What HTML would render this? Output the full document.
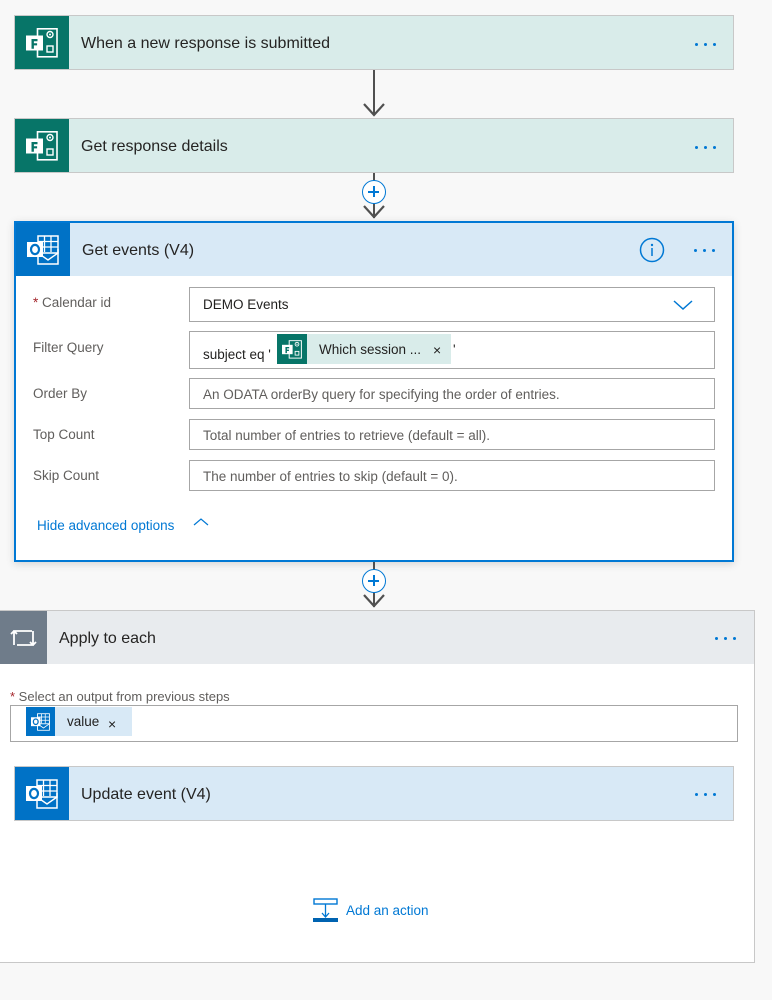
<!DOCTYPE html>
<html><head><meta charset="utf-8"><style>
*{margin:0;padding:0;box-sizing:border-box}
body{width:772px;height:1000px;background:#f8f8f8;font-family:"Liberation Sans",sans-serif;position:relative;overflow:hidden;color:#201f1e}
.a{position:absolute}
.card{position:absolute;border:1px solid #c8c8c8}
.ib{position:absolute;left:0;top:0;bottom:0;width:54px;display:flex;align-items:center;justify-content:center}
.title{position:absolute;font-size:16px;color:#252423}
.dots{position:absolute;font-size:0}
.dots i{display:inline-block;width:3px;height:3px;border-radius:50%;background:#0078d4;margin-right:6px}
.lbl{position:absolute;left:33px;font-size:13.5px;color:#605e5c}
.inp{position:absolute;left:189px;width:526px;border:1px solid #a6a6a6;background:#fff;font-size:13.5px;padding-left:13px;color:#605e5c}
.line{position:absolute;left:373px;width:2px;background:#505050}
.plus{position:absolute;left:362px;width:24px;height:24px;border:1.5px solid #0078d4;border-radius:50%;background:#fff}
.plus:before{content:"";position:absolute;left:5px;top:10px;width:11px;height:1.5px;background:#0078d4}
.plus:after{content:"";position:absolute;left:10px;top:5px;width:1.5px;height:11px;background:#0078d4}
</style></head><body>
<svg width="0" height="0" style="position:absolute"><defs>
<symbol id="forms" viewBox="0 0 32 30"><rect x="11.5" y="0.8" width="19.5" height="28" fill="none" stroke="#fff" stroke-width="1.6"/><circle cx="24" cy="6.5" r="3" fill="none" stroke="#fff" stroke-width="1.4"/><circle cx="24" cy="6.5" r="1" fill="#fff"/><rect x="21" y="18" width="6" height="6" fill="none" stroke="#fff" stroke-width="1.4"/><rect x="0" y="7.5" width="17" height="15" fill="#fff"/><path d="M5.5 11h6v2.2h-3.6v2h3.2v2.2h-3.2v3.3h-2.4z" fill="#077568"/></symbol>
<symbol id="ol" viewBox="0 0 32 30"><rect x="11" y="1" width="20" height="17" fill="none" stroke="#fff" stroke-width="1.5"/><path d="M17.5 1v16M24 1v16M11 6.5h20M11 12h20" stroke="#fff" stroke-width="1.3"/><path d="M11 18v11h20V14" fill="none" stroke="#fff" stroke-width="1.5"/><path d="M11 18l10 7 10-7" fill="none" stroke="#fff" stroke-width="1.4"/><rect x="0" y="7" width="16" height="15" fill="#fff"/><ellipse cx="8" cy="14.5" rx="4" ry="4.6" fill="none" stroke="#0072c6" stroke-width="2.2"/></symbol>
</defs></svg>

<div class="card" style="left:14px;top:15px;width:720px;height:55px;background:#d9ecea">
<div class="ib" style="background:#077568"><svg width="32" height="30"><use href="#forms"/></svg></div>
<div class="title" style="left:66px;top:19px">When a new response is submitted</div>
<div class="dots" style="left:680px;top:27px"><i></i><i></i><i></i></div>
</div>
<div class="line" style="top:70px;height:45px"></div>
<svg class="a" style="left:362px;top:98px" width="24" height="20"><path d="M2 6l10 11 10-11" fill="none" stroke="#505050" stroke-width="2.2"/></svg>

<div class="card" style="left:14px;top:118px;width:720px;height:55px;background:#d9ecea">
<div class="ib" style="background:#077568"><svg width="32" height="30"><use href="#forms"/></svg></div>
<div class="title" style="left:66px;top:19px">Get response details</div>
<div class="dots" style="left:680px;top:27px"><i></i><i></i><i></i></div>
</div>
<div class="line" style="top:173px;height:45px"></div>
<div class="plus" style="top:180px"></div>
<svg class="a" style="left:362px;top:200px" width="24" height="20"><path d="M2 6l10 11 10-11" fill="none" stroke="#505050" stroke-width="2.2"/></svg>

<div class="a" style="left:14px;top:221px;width:720px;height:341px;border:2px solid #0078d4;background:#fff;box-shadow:0 2px 8px rgba(0,0,0,.15)">
<div class="a" style="left:0;top:0;width:716px;height:53px;background:#d8e9f6">
<div class="ib" style="background:#0072c6;width:54px"><svg width="32" height="30"><use href="#ol"/></svg></div>
<div class="title" style="left:66px;top:19px">Get events (V4)</div>
<svg class="a" style="left:623px;top:14px" width="26" height="26"><circle cx="13" cy="13" r="11.5" fill="none" stroke="#0078d4" stroke-width="1.5"/><circle cx="13" cy="8" r="1.2" fill="#0078d4"/><path d="M13 11v8" stroke="#0078d4" stroke-width="1.5"/></svg>
<div class="dots" style="left:678px;top:26px"><i></i><i></i><i></i></div>
</div>
</div>
<div class="lbl" style="top:295px"><span style="color:#a4262c">*</span> Calendar id</div>
<div class="inp" style="top:287px;height:35px;line-height:33px;color:#201f1e">DEMO Events
<svg class="a" style="left:483px;top:10px" width="20" height="14"><path d="M1 3l9 8 9-8" fill="none" stroke="#0078d4" stroke-width="1.5"/></svg></div>
<div class="lbl" style="top:340px">Filter Query</div>
<div class="inp" style="top:331px;height:38px;color:#201f1e"><span class="a" style="left:13px;top:15px">subject eq '</span>
<div class="a" style="left:87px;top:2px;width:174px;height:30px;background:#d9ecea">
<div class="a" style="left:0;top:0;width:30px;height:30px;background:#077568;display:flex;align-items:center;justify-content:center"><svg width="20" height="19" viewBox="0 0 32 30"><use href="#forms"/></svg></div>
<span class="a" style="left:42px;top:8px;font-size:13.5px">Which session ...</span>
<span class="a" style="left:156px;top:8px;font-size:14px">×</span>
</div><span class="a" style="left:263px;top:10px">'</span></div>
<div class="lbl" style="top:386px">Order By</div>
<div class="inp" style="top:378px;height:31px;line-height:31px">An ODATA orderBy query for specifying the order of entries.</div>
<div class="lbl" style="top:427px">Top Count</div>
<div class="inp" style="top:419px;height:31px;line-height:31px">Total number of entries to retrieve (default = all).</div>
<div class="lbl" style="top:468px">Skip Count</div>
<div class="inp" style="top:460px;height:31px;line-height:31px">The number of entries to skip (default = 0).</div>
<div class="a" style="left:37px;top:518px;font-size:13.5px;color:#0078d4">Hide advanced options</div>
<svg class="a" style="left:193px;top:517px" width="16" height="10"><path d="M1 8l7-6 7 6" fill="none" stroke="#0078d4" stroke-width="1.2"/></svg>

<div class="line" style="top:562px;height:45px"></div>
<div class="plus" style="top:569px"></div>
<svg class="a" style="left:362px;top:589px" width="24" height="20"><path d="M2 6l10 11 10-11" fill="none" stroke="#505050" stroke-width="2.2"/></svg>

<div class="a" style="left:0;top:610px;width:755px;height:353px;border:1px solid #c8c8c8;border-left:none;background:#fff">
<div class="a" style="left:0;top:0;width:754px;height:53px;background:#e8ebee">
<div class="ib" style="width:47px;background:#6f7c8a"><svg width="28" height="20"><path d="M4 17V3h18M4 3l-3 3M4 3l3 3" fill="none" stroke="#fff" stroke-width="1.8"/><path d="M7 17h16V3M23 17l-3-3M23 17l3-3" fill="none" stroke="#fff" stroke-width="1.8"/></svg></div>
<div class="title" style="left:59px;top:19px">Apply to each</div>
<div class="dots" style="left:715px;top:26px"><i></i><i></i><i></i></div>
</div>
<div class="a" style="left:10px;top:78px;font-size:13px;color:#605e5c"><span style="color:#a4262c">*</span> Select an output from previous steps</div>
<div class="a" style="left:10px;top:94px;width:728px;height:37px;border:1px solid #a6a6a6">
<div class="a" style="left:15px;top:1px;width:106px;height:29px;background:#d8e9f6">
<div class="a" style="left:0;top:0;width:29px;height:29px;background:#0072c6;display:flex;align-items:center;justify-content:center"><svg width="19" height="18" viewBox="0 0 32 30"><use href="#ol"/></svg></div>
<span class="a" style="left:41px;top:7px;font-size:13.5px">value</span>
<span class="a" style="left:82px;top:9px;font-size:14px">×</span>
</div></div>
<div class="card" style="left:14px;top:155px;width:720px;height:55px;background:#d8e9f6">
<div class="ib" style="background:#0072c6"><svg width="32" height="30"><use href="#ol"/></svg></div>
<div class="title" style="left:66px;top:19px">Update event (V4)</div>
<div class="dots" style="left:680px;top:26px"><i></i><i></i><i></i></div>
</div>
<svg class="a" style="left:313px;top:287px" width="26" height="26"><rect x="1" y="1" width="23" height="5" fill="none" stroke="#0078d4" stroke-width="1.4"/><path d="M12.5 6v13M9 15l3.5 4 3.5-4" fill="none" stroke="#0078d4" stroke-width="1.3"/><rect x="0" y="20" width="25" height="4" fill="#0063b1"/></svg>
<div class="a" style="left:346px;top:292px;font-size:13.5px;color:#0078d4">Add an action</div>
</div>
</body></html>
